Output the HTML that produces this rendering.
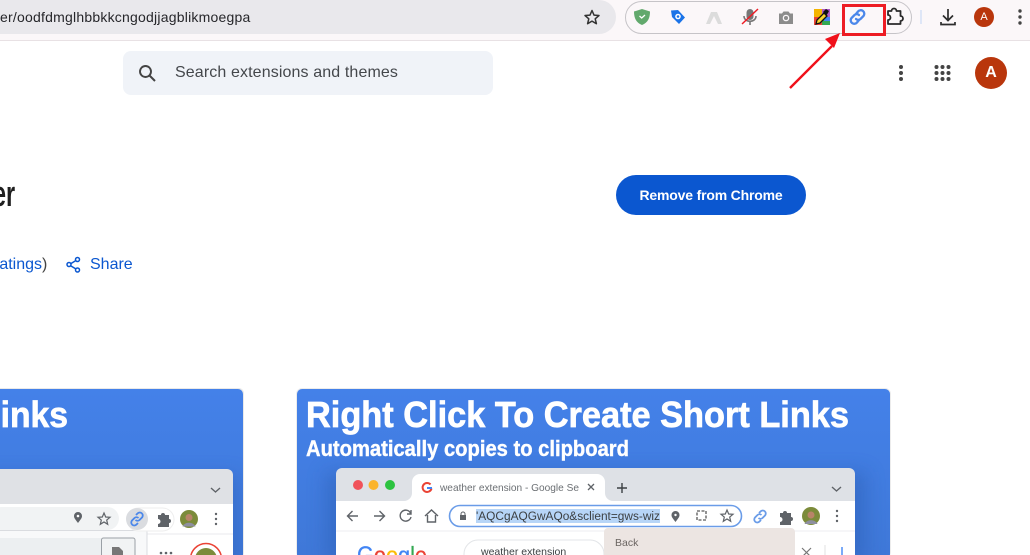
<!DOCTYPE html>
<html><head><meta charset="utf-8"><style>
html,body{margin:0;padding:0;background:#fff}
body{width:1030px;height:555px;overflow:hidden;position:relative;font-family:"Liberation Sans",sans-serif}
svg{position:absolute;left:0;top:0}
.a{position:absolute;white-space:nowrap}
</style></head><body>
<div class="a" style="left:0;top:0;width:1030px;height:40px;background:#fbf7f9;border-bottom:1px solid #e8e1e4"></div>
<div class="a" style="left:-20px;top:0;width:636px;height:34px;background:#e9e8ec;border-radius:0 17px 17px 0"></div>
<div class="a" style="left:0;top:9px;font-size:14px;color:#26262a;line-height:17px;letter-spacing:.22px">er/oodfdmglhbbkkcngodjjagblikmoegpa</div>
<div class="a" style="left:625px;top:1px;width:285px;height:31px;border:1px solid #c6c4c8;border-radius:17px"></div>
<div class="a" style="left:123px;top:51px;width:370px;height:44px;background:#f0f3f8;border-radius:8px"></div>
<div class="a" style="left:175px;top:63px;font-size:16px;line-height:19px;color:#44474b;letter-spacing:.12px">Search extensions and themes</div>
<div class="a" style="left:-7px;top:175px;font-size:36px;line-height:38px;font-weight:bold;color:#1f1f1f;transform:scaleX(.65);transform-origin:left top">er</div>
<div class="a" style="left:-6px;top:255px;font-size:16px;line-height:19px;color:#0b57d0">ratings<span style="color:#444">)</span></div>
<div class="a" style="left:90px;top:255px;font-size:16px;line-height:19px;color:#0b57d0">Share</div>
<div class="a" style="left:616px;top:175px;width:190px;height:40px;border-radius:20px;background:#0b57d0;color:#fff;font-size:14px;font-weight:bold;line-height:40px;text-align:center;letter-spacing:-.18px">Remove from Chrome</div>
<div class="a" style="left:975px;top:57px;width:32px;height:32px;border-radius:50%;background:#b9360c;color:#fff;font-size:16px;font-weight:bold;line-height:32px;text-align:center">A</div>
<div class="a" style="left:974px;top:7px;width:20px;height:20px;border-radius:50%;background:#b9360c;color:#fff;font-size:11px;line-height:20px;text-align:center">A</div>

<svg width="1030" height="555" viewBox="0 0 1030 555" style="font-family:'Liberation Sans',sans-serif">
<defs>
<linearGradient id="bg" x1="0" y1="0" x2="0" y2="1"><stop offset="0" stop-color="#4481e9"/><stop offset="1" stop-color="#3f78d8"/></linearGradient>
<clipPath id="c1"><rect x="297" y="389" width="593" height="170" rx="5"/></clipPath>
<clipPath id="c2"><rect x="-20" y="389" width="263" height="170" rx="5"/></clipPath>
<filter id="b" x="-20%" y="-30%" width="140%" height="160%"><feGaussianBlur stdDeviation="9"/></filter>
</defs>
<!-- star -->
<path d="M592 10.500l2 4.600 5 .4-3.800 3.300 1.200 4.900-4.400-2.600-4.400 2.600 1.200-4.900-3.800-3.300 5-.4z" fill="none" stroke="#333" stroke-width="1.500" stroke-linejoin="round"/>
<!-- shield -->
<path d="M642 9l8 2.500c0 6.500-2 11-8 13.500-6-2.500-8-7-8-13.500z" fill="#62a96d"/>
<path d="M639.500 16l2.200 2 3.300-3" fill="none" stroke="#fff" stroke-width="1.300"/>
<!-- tag -->
<path d="M671 10.500l7-.5 7 7.500-6 6.500-7-7z" fill="#1a73e8"/>
<circle cx="678" cy="16.500" r="2.800" fill="#fff"/><circle cx="678" cy="16.500" r="1.300" fill="#1a73e8"/>
<!-- grey A -->
<path d="M706 24l5-12h6l5 12h-4l-4-8-4 8z" fill="#dcdcdc"/>
<!-- mic -->
<rect x="746.500" y="9" width="7" height="11" rx="3.500" fill="#777"/>
<path d="M744 16c0 7 12 7 12 0M750 21v4" fill="none" stroke="#777" stroke-width="1.600"/>
<path d="M742 24l16-15" stroke="#ee1c25" stroke-width="1.500"/>
<!-- camera -->
<path d="M779 13.500h3l1.500-2h5l1.500 2h3v10.500h-14z" fill="#8c8c8c"/>
<circle cx="786" cy="18" r="3.300" fill="#fbf7f9"/><circle cx="786" cy="18" r="2" fill="#8c8c8c"/>
<!-- colour picker -->
<rect x="814" y="9" width="8" height="8" fill="#f4b400"/><rect x="822" y="9" width="8" height="8" fill="#b05cc8"/>
<rect x="814" y="17" width="8" height="8" fill="#ea4335"/><rect x="822" y="17" width="8" height="8" fill="#34a853"/>
<rect x="824" y="17" width="6" height="4" fill="#4285f4"/>
<path d="M816 24l1-4 7-7 3 3-7 7z" fill="#f6d32d" stroke="#111" stroke-width="1.300"/>
<path d="M823 12l3-3 3 2-1 2-2 3z" fill="#111"/>
<!-- link -->
<g fill="none" stroke="#4b87ea" stroke-width="2.300" stroke-linecap="round"><path d="M856 14l2-2.500a3.500 3.500 0 0 1 5.500 4.500l-3 3a3.500 3.500 0 0 1-4.500 0"/><path d="M859 20l-2 2.500a3.500 3.500 0 0 1-5.500-4.500l3-3a3.500 3.500 0 0 1 4.500 0"/></g>
<!-- red box -->
<rect x="843.500" y="5.500" width="41" height="29" fill="none" stroke="#ed1c24" stroke-width="3"/>
<!-- puzzle -->
<path d="M888 11h3.500a2.500 2.500 0 0 1 5 0h4v5a2.500 2.500 0 0 1 0 5v3h-12.500v-4a2.500 2.500 0 0 0 0-5z" fill="none" stroke="#2a2a2a" stroke-width="1.800" stroke-linejoin="round"/>
<path d="M921 10v14" stroke="#d4e1f6" stroke-width="1.500"/>
<!-- download -->
<path d="M948 9v11M943 15.500l5 5 5-5M941 22v2.500h14V22" fill="none" stroke="#2d2d2d" stroke-width="1.700"/>
<g fill="#444"><circle cx="1020" cy="11" r="1.700"/><circle cx="1020" cy="17" r="1.700"/><circle cx="1020" cy="23" r="1.700"/></g>
<!-- arrow -->
<path d="M790 88l42-42" stroke="#f0101a" stroke-width="2.400"/><path d="M840 33l-15 6 9 9z" fill="#f0101a"/>
<!-- search -->
<circle cx="145.500" cy="71.500" r="5.500" fill="none" stroke="#444" stroke-width="1.900"/><path d="M149.500 75.500l5.500 5.500" stroke="#444" stroke-width="2"/>
<!-- page menu -->
<g fill="#444"><circle cx="901" cy="67" r="2"/><circle cx="901" cy="73" r="2"/><circle cx="901" cy="79" r="2"/>
<circle cx="936.500" cy="67" r="2"/><circle cx="942.500" cy="67" r="2"/><circle cx="948.500" cy="67" r="2"/><circle cx="936.500" cy="73" r="2"/><circle cx="942.500" cy="73" r="2"/><circle cx="948.500" cy="73" r="2"/><circle cx="936.500" cy="79" r="2"/><circle cx="942.500" cy="79" r="2"/><circle cx="948.500" cy="79" r="2"/></g>
<!-- share -->
<g fill="none" stroke="#0b57d0" stroke-width="1.500"><circle cx="77.500" cy="259.500" r="2"/><circle cx="69" cy="264.500" r="2"/><circle cx="77.500" cy="270" r="2"/><path d="M71 263.500l5-3M71 266l5 3"/></g>

<!-- left card -->
<rect x="-20" y="388" width="264" height="170" rx="5" fill="#e9e9e9"/>
<g clip-path="url(#c2)">
<rect x="-20" y="389" width="263" height="166" fill="url(#bg)"/>
<rect x="-20" y="475" width="258" height="90" fill="#2f62b8" opacity=".5" filter="url(#b)"/>
<text x="-20" y="427" font-size="36" font-weight="bold" fill="#fff" stroke="#fff" stroke-width=".7" textLength="88" lengthAdjust="spacingAndGlyphs">Links</text>
<rect x="-10" y="469" width="243" height="90" rx="6" fill="#dfe1e5"/>
<rect x="-10" y="504" width="243" height="51" fill="#fff"/>
<rect x="-10" y="507" width="129" height="23" rx="11.500" fill="#f1f3f4"/>
<path d="M147 534h86" stroke="#e8eaed"/>
<rect x="-10" y="530.500" width="157" height="30" fill="#f8f9fa" stroke="#dadce0"/>
<rect x="-10" y="538" width="112" height="20" fill="#eceff1"/>
<rect x="101.500" y="538" width="33.500" height="20" rx="2" fill="#f1f3f4" stroke="#9aa0a6"/>
<path d="M112 547h7l4 4v5h-11z" fill="#777"/>
<rect x="127" y="508" width="47" height="23" rx="11.500" fill="#fff" stroke="#eee"/>
<circle cx="137" cy="519" r="11" fill="#dadce0"/>
<path d="M78 523c-3-4-4-5-4-7a4 4 0 0 1 8 0c0 2-1 3-4 7z" fill="#5f6368"/><circle cx="78" cy="516" r="1.300" fill="#fff"/>
<path d="M104 513l1.700 4 4.300.3-3.300 2.800 1 4.200-3.700-2.300-3.700 2.300 1-4.200-3.300-2.800 4.300-.3z" fill="none" stroke="#5f6368" stroke-width="1.200"/>
<g fill="none" stroke="#4b87ea" stroke-width="1.800"><path d="M136 515l1.500-1.500a3 3 0 0 1 4.500 4l-2.500 2.500a3 3 0 0 1-4 0"/><path d="M138 523l-1.500 1.500a3 3 0 0 1-4.500-4l2.500-2.500a3 3 0 0 1 4 0"/></g>
<path d="M158 515h3a2 2 0 0 1 4 0h4v4a2 2 0 0 1 0 4v4h-11v-3a2 2 0 0 0 0-5z" fill="#5f6368"/>
<circle cx="189" cy="519" r="9" fill="#7c8b3a"/><circle cx="189" cy="517.500" r="3.500" fill="#b98468"/><path d="M182.500 526.500c2-5 11-5 13 0z" fill="#8e8fa0"/>
<g fill="#5f6368"><circle cx="216" cy="514" r="1.200"/><circle cx="216" cy="519" r="1.200"/><circle cx="216" cy="524" r="1.200"/><circle cx="161" cy="553" r="1.300"/><circle cx="166" cy="553" r="1.300"/><circle cx="171" cy="553" r="1.300"/></g>
<path d="M211 488l4.500 4 4.500-4" fill="none" stroke="#5f6368" stroke-width="1.400"/>
<circle cx="206" cy="559" r="15.500" fill="#fff" stroke="#ea4335" stroke-width="1.500"/><circle cx="206" cy="559" r="11" fill="#7c8b3a"/>
</g>

<!-- right card -->
<rect x="296" y="388" width="595" height="170" rx="6" fill="#ececec"/>
<g clip-path="url(#c1)">
<rect x="297" y="389" width="593" height="166" fill="url(#bg)"/>
<rect x="326" y="472" width="540" height="90" fill="#2f62b8" opacity=".55" filter="url(#b)"/>
<text x="306" y="427" font-size="36" font-weight="bold" fill="#fff" stroke="#fff" stroke-width=".7" textLength="543" lengthAdjust="spacingAndGlyphs">Right Click To Create Short Links</text>
<text x="306" y="456" font-size="22" font-weight="bold" fill="#fff" stroke="#fff" stroke-width=".4" textLength="323" lengthAdjust="spacingAndGlyphs">Automatically copies to clipboard</text>
<rect x="336" y="468" width="519" height="95" rx="6" fill="#dee1e6"/>
<path d="M336 501h68a8 8 0 0 0 8-8v-11a8 8 0 0 1 8-8h177a8 8 0 0 1 8 8v11a8 8 0 0 0 8 8h242v60h-519z" fill="#fff"/>
<circle cx="358" cy="485" r="5" fill="#f0525a"/><circle cx="373.500" cy="485" r="5" fill="#fbb42c"/><circle cx="390" cy="485" r="5" fill="#2cc340"/>
<g fill="none" stroke-width="2"><path d="M430.500 484.500a4.500 4.500 0 1 0 1 4" stroke="#ea4335"/><path d="M427 488h5" stroke="#4285f4"/></g>
<text x="440" y="491" font-size="10.500" fill="#6b6f73" textLength="139" lengthAdjust="spacingAndGlyphs">weather extension - Google Se</text>
<path d="M588 484l6 6m0-6l-6 6" stroke="#5f6368" stroke-width="1.300"/>
<path d="M622 483v10m-5-5h10" stroke="#3c4043" stroke-width="1.400"/>
<path d="M832 487l4.500 4 4.500-4" fill="none" stroke="#5f6368" stroke-width="1.400"/>
<path d="M336 531h519" stroke="#eceef0"/>
<g fill="none" stroke="#5f6368" stroke-width="1.400"><path d="M358 516h-10m4.500-5l-5 5 5 5"/><path d="M374 516h10m-4.500-5l5 5-5 5"/><path d="M410.500 513a5.500 5.500 0 1 0 .5 4M411 510v4h-4"/><path d="M425 516l6.500-6 6.500 6M427.500 515v7h8v-7"/></g>
<rect x="449.500" y="505.500" width="292" height="21" rx="10.500" fill="#fff" stroke="#6a9ce8" stroke-width="1.600"/>
<rect x="460" y="515" width="6" height="5" fill="#5f6368"/><path d="M461 515v-1a2 2 0 0 1 4 0v1" fill="none" stroke="#5f6368"/>
<rect x="476" y="509" width="184" height="14" fill="#b7d5f7"/>
<text x="476" y="520" font-size="11.500" fill="#3c4043" textLength="184" lengthAdjust="spacingAndGlyphs">'AQCgAQGwAQo&amp;sclient=gws-wiz</text>
<path d="M675.500 522c-3-4-4-5-4-7a4 4 0 0 1 8 0c0 2-1 3-4 7z" fill="#5f6368"/><circle cx="675.500" cy="515" r="1.200" fill="#fff"/>
<rect x="697" y="511" width="9" height="9" fill="none" stroke="#777" stroke-width="1.600" stroke-dasharray="3 1.500"/>
<path d="M727 510l1.700 4 4.300.3-3.300 2.800 1 4.200-3.700-2.300-3.700 2.300 1-4.200-3.300-2.800 4.300-.3z" fill="none" stroke="#5f6368" stroke-width="1.200"/>
<g fill="none" stroke="#6a9ce8" stroke-width="1.800"><path d="M759 513l1.500-1.500a3 3 0 0 1 4.500 4l-2.500 2.500a3 3 0 0 1-4 0"/><path d="M761 520l-1.500 1.500a3 3 0 0 1-4.500-4l2.500-2.500a3 3 0 0 1 4 0"/></g>
<path d="M780 513h3a2 2 0 0 1 4 0h4v4a2 2 0 0 1 0 4v4h-11v-3a2 2 0 0 0 0-5z" fill="#5f6368"/>
<circle cx="811" cy="516" r="9" fill="#7c8b3a"/><circle cx="811" cy="515" r="3.500" fill="#b98468"/><path d="M804.500 524c2-5 11-5 13 0z" fill="#8e8fa0"/>
<g fill="#5f6368"><circle cx="837" cy="511" r="1.200"/><circle cx="837" cy="516" r="1.200"/><circle cx="837" cy="521" r="1.200"/></g>
<rect x="464" y="540" width="140" height="30" rx="14" fill="#fff" stroke="#e3e5e8"/>
<text x="481" y="555" font-size="10.500" fill="#3c4043">weather extension</text>
<text x="357" y="564" font-size="25" fill="#4285f4" stroke="#4285f4" stroke-width=".3" textLength="70" lengthAdjust="spacingAndGlyphs">G<tspan fill="#ea4335" stroke="#ea4335">o</tspan><tspan fill="#fbbc05" stroke="#fbbc05">o</tspan>g<tspan fill="#34a853" stroke="#34a853">l</tspan><tspan fill="#ea4335" stroke="#ea4335">e</tspan></text>
<rect x="604" y="528" width="191" height="40" rx="4" fill="#ece5e2"/>
<text x="615" y="546" font-size="10.500" fill="#6b6562">Back</text>
<path d="M802 548l9 9m0-9l-9 9" stroke="#777" stroke-width="1.200"/>
<path d="M825 545v12" stroke="#e0e0e0"/>
<path d="M842 547v10" stroke="#4285f4" stroke-width="1.400"/>
</g>
</svg>
</body></html>
